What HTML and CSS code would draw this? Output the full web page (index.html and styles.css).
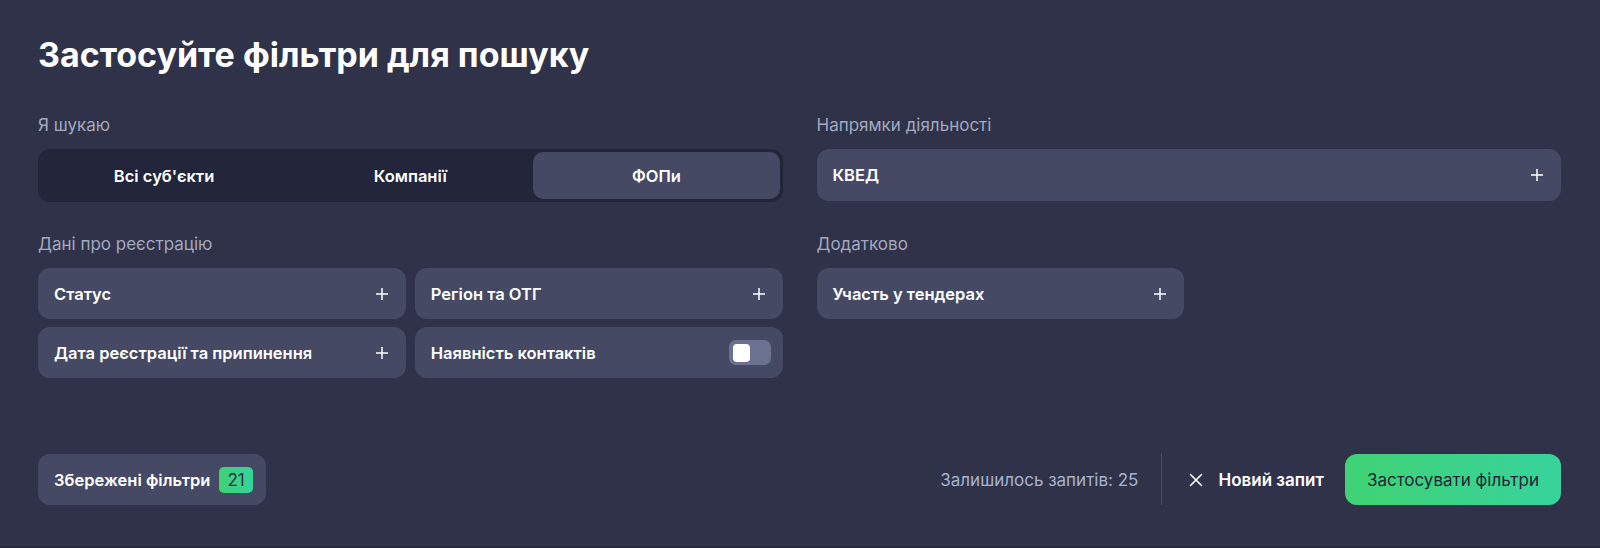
FILE: index.html
```html
<!DOCTYPE html>
<html lang="uk">
    <head>
        <meta charset="UTF-8">
        <meta name="viewport" content="width=device-width, initial-scale=1.0">
        <title>Фільтри пошуку</title>
        <link rel="stylesheet" href="styles.css">
    </head>

    <body>
        <div class="filters">
            <h1 class="filters-title">Застосуйте фільтри для пошуку</h1>

            <div class="filters-grid">
                <div class="section">
                    <div class="section-label">Я шукаю</div>
                    <div class="tabs">
                        <button class="tab">Всі суб'єкти</button>
                        <button class="tab">Компанії</button>
                        <button class="tab active">ФОПи</button>
                    </div>
                </div>

                <div class="section">
                    <div class="section-label">Напрямки діяльності</div>
                    <div class="field field-wide">
                        <span>КВЕД</span>
                        <svg class="plus" width="14" height="14" viewBox="0 0 14 14"><path d="M7 1v12M1 7h12"/></svg>
                    </div>
                </div>

                <div class="section">
                    <div class="section-label">Дані про реєстрацію</div>
                    <div class="field-grid">
                        <div class="field">
                            <span>Статус</span>
                            <svg class="plus" width="14" height="14" viewBox="0 0 14 14"><path d="M7 1v12M1 7h12"/></svg>
                        </div>
                        <div class="field">
                            <span>Регіон та ОТГ</span>
                            <svg class="plus" width="14" height="14" viewBox="0 0 14 14"><path d="M7 1v12M1 7h12"/></svg>
                        </div>
                        <div class="field">
                            <span>Дата реєстрації та припинення</span>
                            <svg class="plus" width="14" height="14" viewBox="0 0 14 14"><path d="M7 1v12M1 7h12"/></svg>
                        </div>
                        <div class="field">
                            <span>Наявність контактів</span>
                            <span class="toggle"><span class="toggle-knob"></span></span>
                        </div>
                    </div>
                </div>

                <div class="section">
                    <div class="section-label">Додатково</div>
                    <div class="field-grid">
                        <div class="field">
                            <span>Участь у тендерах</span>
                            <svg class="plus" width="14" height="14" viewBox="0 0 14 14"><path d="M7 1v12M1 7h12"/></svg>
                        </div>
                    </div>
                </div>
            </div>

            <div class="bottom-bar">
                <button class="saved-btn">
                    Збережені фільтри
                    <span class="badge">21</span>
                </button>

                <div class="actions">
                    <span class="requests-left">Залишилось запитів: 25</span>
                    <span class="divider"></span>
                    <button class="new-query">
                        <svg width="16" height="16" viewBox="0 0 16 16"><path d="M2 2l12 12M14 2L2 14"/></svg>
                        Новий запит
                    </button>
                    <button class="apply-btn">Застосувати фільтри</button>
                </div>
            </div>
        </div>
    </body>
</html>
```

FILE: styles.css
```css
body {
    margin: 0;
    background-color: #2f3249;
    font-family: Inter, "Noto Sans", sans-serif;
    color: #fff;
}

button {
    font-family: inherit;
    border: none;
    cursor: pointer;
}

.filters {
    display: flex;
    flex-direction: column;
    height: 548px;
    box-sizing: border-box;
    padding: 35px 39px 41px 38px;
    border-bottom: 2px solid #272a3d;
}

.filters-title {
    margin: 0 0 40px;
    font-size: 34px;
    font-weight: 700;
    line-height: 40px;
}

.filters-grid {
    display: grid;
    grid-template-columns: 1fr 1fr;
    column-gap: 34px;
    row-gap: 32px;
}

.section-label {
    font-size: 17px;
    line-height: 20px;
    color: #a3a9bf;
    margin-bottom: 14px;
}

.tabs {
    display: grid;
    grid-template-columns: 1fr 1fr 1fr;
    padding: 3px;
    height: 53px;
    box-sizing: border-box;
    background-color: #23263a;
    border-radius: 12px;
}

.tab {
    background: none;
    color: #fff;
    font-size: 16.5px;
    font-weight: 600;
    border-radius: 10px;
}

.tab.active {
    background-color: #454963;
}

.field-grid {
    display: grid;
    grid-template-columns: 1fr 1fr;
    gap: 8px 9px;
}

.field {
    display: flex;
    align-items: center;
    justify-content: space-between;
    height: 51px;
    padding: 0 17px 0 16px;
    background-color: #454963;
    border-radius: 12px;
    font-size: 16.5px;
    font-weight: 600;
}

.field-wide {
    height: 52px;
}

.plus path {
    stroke: #fff;
    stroke-width: 1.5;
    fill: none;
}

.toggle {
    display: flex;
    align-items: center;
    width: 42px;
    height: 25px;
    padding: 0 4px;
    box-sizing: border-box;
    margin-right: -5px;
    background-color: #6b7190;
    border-radius: 7px;
}

.toggle-knob {
    width: 17px;
    height: 18px;
    background-color: #fff;
    border-radius: 4px;
}

.bottom-bar {
    display: flex;
    justify-content: space-between;
    align-items: center;
    margin-top: auto;
}

.saved-btn {
    display: flex;
    align-items: center;
    gap: 9px;
    height: 51px;
    padding: 0 13px 0 16px;
    background-color: #454963;
    border-radius: 12px;
    color: #fff;
    font-size: 16.5px;
    font-weight: 600;
}

.badge {
    display: inline-block;
    padding: 0 8px;
    line-height: 26px;
    border-radius: 5px;
    background: linear-gradient(90deg, #40d274, #37d39c);
    color: #24304a;
    font-size: 17px;
    font-weight: 400;
}

.actions {
    display: flex;
    align-items: center;
}

.requests-left {
    font-size: 17px;
    color: #a8b3d2;
}

.divider {
    width: 1px;
    height: 51px;
    margin: 0 26px 0 23px;
    background-color: #4a4e6a;
}

.new-query {
    display: flex;
    align-items: center;
    gap: 14px;
    background: none;
    color: #fff;
    font-size: 17px;
    font-weight: 600;
    padding: 0;
    margin-right: 21px;
}

.new-query path {
    stroke: #fff;
    stroke-width: 1.6;
    fill: none;
}

.apply-btn {
    height: 51px;
    padding: 0 22px;
    border-radius: 12px;
    background: linear-gradient(90deg, #40d274, #37d39c);
    color: #1f2536;
    font-size: 17px;
}
```
